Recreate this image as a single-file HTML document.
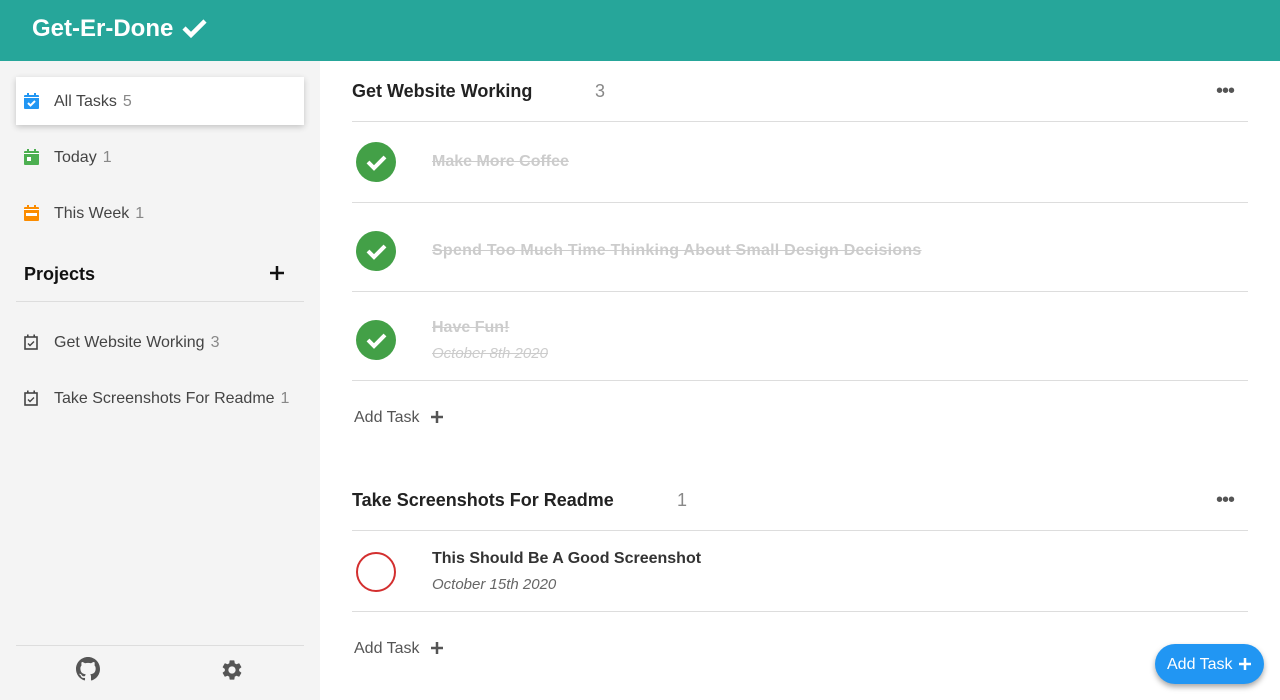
<!DOCTYPE html>
<html><head><meta charset="utf-8"><style>
*{margin:0;padding:0;box-sizing:border-box}
body{width:1280px;height:700px;overflow:hidden;font-family:"Liberation Sans",sans-serif;background:#fff;position:relative;color:#444}
.a{position:absolute;white-space:nowrap}
.hdr{left:0;top:0;width:1280px;height:61px;background:#26a69a}
.side{left:0;top:61px;width:320px;height:639px;background:#f4f4f4}
.nav{font-size:16px;color:#444}
.cnt{color:#888;margin-left:6px}
.line{height:1px;background:#ddd}
.h{font-size:18px;font-weight:bold;color:#222}
.done{font-size:16px;font-weight:bold;color:#ccc;text-decoration:line-through}
.date{font-size:15px;font-style:italic}
.chk{width:40px;height:40px;border-radius:50%;background:#43a047}
</style></head><body>
<div class="a hdr"></div>
<div class="a" style="left:32px;top:15px;font-size:24px;font-weight:bold;color:#fff">Get-Er-Done</div>
<svg class="a" style="left:181px;top:17px" width="27" height="22" viewBox="0 0 27 22"><path d="M3 11l7 7L24 4" stroke="#fff" stroke-width="4.5" fill="none"/></svg>
<div class="a side"></div>
<div class="a" style="left:16px;top:77px;width:288px;height:48px;background:#fff;box-shadow:0 2px 6px rgba(0,0,0,.2)"></div>
<svg class="a" style="left:24px;top:93px" width="15" height="16" viewBox="0 0 15 16"><rect x="0" y="2" width="15" height="14" rx="1" fill="#2196f3"/><rect x="3" y="0" width="2" height="4" fill="#2196f3"/><rect x="10" y="0" width="2" height="4" fill="#2196f3"/><rect x="0" y="4" width="15" height="1" fill="#fff"/><path d="M4 10l2.5 2.5L11 8" stroke="#fff" stroke-width="2" fill="none"/></svg>
<div class="a nav" style="left:54px;top:93px">All Tasks<span class="cnt">5</span></div>
<svg class="a" style="left:24px;top:149px" width="15" height="16" viewBox="0 0 15 16"><rect x="0" y="2" width="15" height="14" rx="1" fill="#4caf50"/><rect x="3" y="0" width="2" height="4" fill="#4caf50"/><rect x="10" y="0" width="2" height="4" fill="#4caf50"/><rect x="0" y="4" width="15" height="1" fill="#fff"/><rect x="3" y="8" width="4" height="4" fill="#fff"/></svg>
<div class="a nav" style="left:54px;top:149px">Today<span class="cnt">1</span></div>
<svg class="a" style="left:24px;top:205px" width="15" height="16" viewBox="0 0 15 16"><rect x="0" y="2" width="15" height="14" rx="1" fill="#fb8c00"/><rect x="3" y="0" width="2" height="4" fill="#fb8c00"/><rect x="10" y="0" width="2" height="4" fill="#fb8c00"/><rect x="0" y="4" width="15" height="1" fill="#fff"/><rect x="2" y="8" width="11" height="3" fill="#fff"/></svg>
<div class="a nav" style="left:54px;top:205px">This Week<span class="cnt">1</span></div>
<div class="a" style="left:24px;top:264px;font-size:18px;font-weight:bold;color:#111">Projects</div>
<svg class="a" style="left:269px;top:265px" width="16" height="16"><path d="M8 1v14M1 8h14" stroke="#111" stroke-width="2.5"/></svg>
<div class="a line" style="left:16px;top:301px;width:288px"></div>
<svg class="a" style="left:24px;top:334px" width="14" height="16" viewBox="0 0 14 16"><rect x="1" y="3" width="12" height="12" fill="none" stroke="#444" stroke-width="1.6"/><rect x="3" y="0.5" width="1.6" height="3" fill="#444"/><rect x="9.4" y="0.5" width="1.6" height="3" fill="#444"/><path d="M4 9.5l2 2 4-4" stroke="#444" stroke-width="1.4" fill="none"/></svg>
<div class="a nav" style="left:54px;top:334px">Get Website Working<span class="cnt">3</span></div>
<svg class="a" style="left:24px;top:390px" width="14" height="16" viewBox="0 0 14 16"><rect x="1" y="3" width="12" height="12" fill="none" stroke="#444" stroke-width="1.6"/><rect x="3" y="0.5" width="1.6" height="3" fill="#444"/><rect x="9.4" y="0.5" width="1.6" height="3" fill="#444"/><path d="M4 9.5l2 2 4-4" stroke="#444" stroke-width="1.4" fill="none"/></svg>
<div class="a nav" style="left:54px;top:390px">Take Screenshots For Readme<span class="cnt">1</span></div>
<div class="a line" style="left:16px;top:645px;width:288px"></div>
<svg class="a" style="left:76px;top:657px" width="24" height="24" viewBox="0 0 16 16"><path fill="#555" d="M8 0C3.58 0 0 3.58 0 8c0 3.54 2.29 6.53 5.47 7.59.4.07.55-.17.55-.38v-1.33c-2.23.48-2.7-1.07-2.7-1.07-.36-.92-.89-1.17-.89-1.17-.73-.5.06-.49.06-.49.8.06 1.23.83 1.23.83.72 1.22 1.87.87 2.33.66.07-.52.28-.87.51-1.07-1.78-.2-3.64-.89-3.64-3.95 0-.87.31-1.59.82-2.15-.08-.2-.36-1.02.08-2.12 0 0 .67-.21 2.2.82a7.6 7.6 0 0 1 4 0c1.53-1.04 2.2-.82 2.2-.82.44 1.1.16 1.92.08 2.12.51.56.82 1.27.82 2.15 0 3.07-1.87 3.75-3.65 3.95.29.25.54.73.54 1.48v2.2c0 .21.15.46.55.38A8.01 8.01 0 0 0 16 8c0-4.42-3.58-8-8-8z"/></svg>
<svg class="a" style="left:220px;top:658px" width="24" height="24" viewBox="0 0 24 24"><path fill="#555" d="M19.14 12.94c.04-.3.06-.61.06-.94 0-.32-.02-.64-.07-.94l2.03-1.58a.49.49 0 0 0 .12-.61l-1.92-3.32a.488.488 0 0 0-.59-.22l-2.39.96c-.5-.38-1.03-.7-1.62-.94l-.36-2.54a.484.484 0 0 0-.48-.41h-3.84c-.24 0-.43.17-.47.41l-.36 2.54c-.59.24-1.13.57-1.62.94l-2.39-.96c-.22-.08-.47 0-.59.22L2.74 8.87c-.12.21-.08.47.12.61l2.03 1.58c-.05.3-.09.63-.09.94s.02.64.07.94l-2.03 1.58a.49.49 0 0 0-.12.61l1.92 3.32c.12.22.37.29.59.22l2.39-.96c.5.38 1.03.7 1.62.94l.36 2.54c.05.24.24.41.48.41h3.84c.24 0 .44-.17.47-.41l.36-2.54c.59-.24 1.13-.56 1.62-.94l2.39.96c.22.08.47 0 .59-.22l1.92-3.32c.12-.22.07-.47-.12-.61l-2.01-1.58zM12 15.6c-1.98 0-3.6-1.62-3.6-3.6s1.62-3.6 3.6-3.6 3.6 1.62 3.6 3.6-1.62 3.6-3.6 3.6z"/></svg>

<div class="a h" style="left:352px;top:81px">Get Website Working</div>
<div class="a" style="left:595px;top:81px;font-size:18px;color:#888">3</div>
<div class="a" style="left:1216px;top:80px;font-size:20px;color:#555;letter-spacing:-1px">•••</div>
<div class="a line" style="left:352px;top:121px;width:896px"></div>
<div class="a chk" style="left:356px;top:142px"></div>
<svg class="a" style="left:356px;top:142px" width="40" height="40"><path d="M12 20l6 6 11-11" stroke="#fff" stroke-width="4" fill="none"/></svg>
<div class="a done" style="left:432px;top:153px">Make More Coffee</div>
<div class="a line" style="left:352px;top:202px;width:896px"></div>
<div class="a chk" style="left:356px;top:231px"></div>
<svg class="a" style="left:356px;top:231px" width="40" height="40"><path d="M12 20l6 6 11-11" stroke="#fff" stroke-width="4" fill="none"/></svg>
<div class="a done" style="left:432px;top:242px;letter-spacing:0.25px">Spend Too Much Time Thinking About Small Design Decisions</div>
<div class="a line" style="left:352px;top:291px;width:896px"></div>
<div class="a chk" style="left:356px;top:320px"></div>
<svg class="a" style="left:356px;top:320px" width="40" height="40"><path d="M12 20l6 6 11-11" stroke="#fff" stroke-width="4" fill="none"/></svg>
<div class="a done" style="left:432px;top:319px">Have Fun!</div>
<div class="a date" style="left:432px;top:345px;color:#ccc;text-decoration:line-through">October 8th 2020</div>
<div class="a line" style="left:352px;top:380px;width:896px"></div>
<div class="a" style="left:354px;top:409px;font-size:16px;color:#555">Add Task</div>
<svg class="a" style="left:430px;top:410px" width="14" height="14"><path d="M7 1v12M1 7h12" stroke="#555" stroke-width="2.5"/></svg>

<div class="a h" style="left:352px;top:490px">Take Screenshots For Readme</div>
<div class="a" style="left:677px;top:490px;font-size:18px;color:#888">1</div>
<div class="a" style="left:1216px;top:489px;font-size:20px;color:#555;letter-spacing:-1px">•••</div>
<div class="a line" style="left:352px;top:530px;width:896px"></div>
<div class="a" style="left:356px;top:552px;width:40px;height:40px;border-radius:50%;border:2.5px solid #d32f2f"></div>
<div class="a" style="left:432px;top:550px;font-size:16px;font-weight:bold;color:#333">This Should Be A Good Screenshot</div>
<div class="a date" style="left:432px;top:576px;color:#666">October 15th 2020</div>
<div class="a line" style="left:352px;top:611px;width:896px"></div>
<div class="a" style="left:354px;top:640px;font-size:16px;color:#555">Add Task</div>
<svg class="a" style="left:430px;top:641px" width="14" height="14"><path d="M7 1v12M1 7h12" stroke="#555" stroke-width="2.5"/></svg>

<div class="a" style="left:1155px;top:644px;width:109px;height:40px;border-radius:20px;background:#2196f3;box-shadow:0 3px 6px rgba(0,0,0,.35)"></div>
<div class="a" style="left:1167px;top:656px;font-size:16px;color:#fff">Add Task</div>
<svg class="a" style="left:1238px;top:657px" width="14" height="14"><path d="M7 1v12M1 7h12" stroke="#fff" stroke-width="2.5"/></svg>
</body></html>
